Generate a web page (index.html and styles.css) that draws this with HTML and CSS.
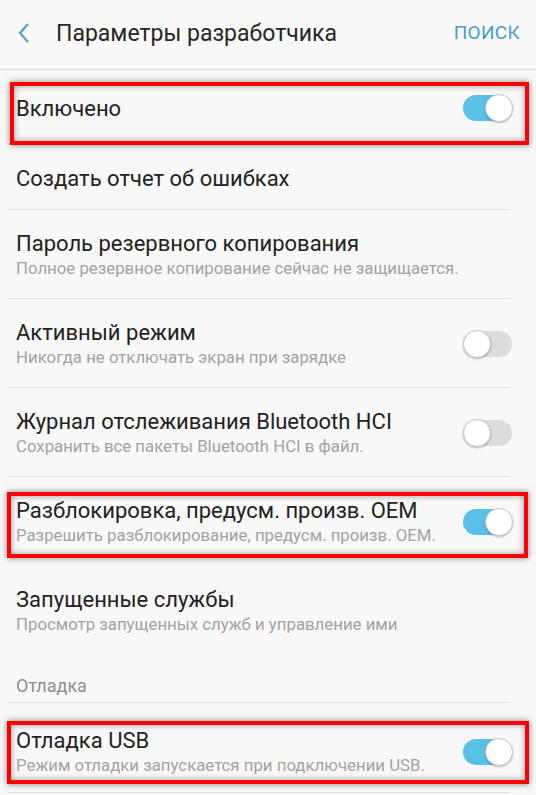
FILE: index.html
```html
<!DOCTYPE html>
<html lang="ru">
<head>
    <meta charset="UTF-8">
    <meta name="viewport" content="width=device-width, initial-scale=1.0">
    <title>Параметры разработчика</title>
    <link rel="stylesheet" href="styles.css">
</head>
<body>

    <!-- Top bar with back arrow and search -->
    <div class="header">
        <svg class="back" width="14" height="22" viewBox="0 0 14 22">
            <polyline points="11,2 3,11 11,20" fill="none" stroke="#4a9dc3" stroke-width="2"/>
        </svg>
        <div class="header-title">Параметры разработчика</div>
        <div class="search">ПОИСК</div>
    </div>

    <div class="list">
        <div class="row row-first marked mark-1 line">
            <div class="text"><div class="title">Включено</div></div>
            <div class="switch on"><span></span></div>
        </div>

        <div class="row row-single line">
            <div class="text"><div class="title">Создать отчет об ошибках</div></div>
        </div>

        <div class="row line">
            <div class="text">
                <div class="title">Пароль резервного копирования</div>
                <div class="sub">Полное резервное копирование сейчас не защищается.</div>
            </div>
        </div>

        <div class="row line">
            <div class="text">
                <div class="title">Активный режим</div>
                <div class="sub">Никогда не отключать экран при зарядке</div>
            </div>
            <div class="switch"><span></span></div>
        </div>

        <div class="row line">
            <div class="text">
                <div class="title">Журнал отслеживания Bluetooth HCI</div>
                <div class="sub">Сохранить все пакеты Bluetooth HCI в файл.</div>
            </div>
            <div class="switch"><span></span></div>
        </div>

        <div class="row marked mark-2">
            <div class="text">
                <div class="title">Разблокировка, предусм. произв. OEM</div>
                <div class="sub">Разрешить разблокирование, предусм. произв. OEM.</div>
            </div>
            <div class="switch on"><span></span></div>
        </div>

        <div class="row">
            <div class="text">
                <div class="title">Запущенные службы</div>
                <div class="sub">Просмотр запущенных служб и управление ими</div>
            </div>
        </div>

        <div class="category line">Отладка</div>

        <div class="row row-last marked mark-3 line">
            <div class="text">
                <div class="title">Отладка USB</div>
                <div class="sub">Режим отладки запускается при подключении USB.</div>
            </div>
            <div class="switch on"><span></span></div>
        </div>
    </div>

</body>
</html>
```

FILE: styles.css
```css
body {
    font-family: 'Roboto', 'Noto Sans', sans-serif;
    background-color: #f8f8f8;
    margin: 0;
    color: #222;
}

.header {
    display: flex;
    align-items: center;
    height: 69px;
    padding: 0 16px 0 17px;
    border-bottom: 1px solid #dcdcdc;
}

.back {
    margin-top: -4px;
}

.header-title {
    flex: 1;
    margin-left: 25px;
    margin-top: -3px;
    font-size: 23px;
    color: #262626;
}

.search {
    margin-top: -4px;
    font-size: 19px;
    color: #4a9dc3;
    letter-spacing: 0.3px;
}

.list {
    display: flex;
    flex-direction: column;
}

.row {
    position: relative;
    display: flex;
    align-items: center;
    height: 89px;
    padding: 0 24px 0 16px;
    box-sizing: border-box;
}

.row-first {
    height: 74px;
    padding-top: 2px;
}

.row-single {
    height: 66px;
    padding-top: 2px;
}

.row-last {
    height: 90px;
    padding-top: 8px;
}

/* dividers stop short of the edges */
.line::before {
    content: '';
    position: absolute;
    left: 8px;
    right: 25px;
    bottom: 0;
    height: 1px;
    background-color: #e2e2e2;
}

.text {
    flex: 1;
}

.title {
    font-size: 22px;
    line-height: 27px;
    color: #222;
}

.sub {
    font-size: 16.8px;
    line-height: 23px;
    color: #a3a3a3;
}

.category {
    position: relative;
    height: 48px;
    padding: 20px 16px 0;
    box-sizing: border-box;
    font-size: 18px;
    color: #8e8e8e;
}

/* switches */
.switch {
    position: relative;
    width: 49px;
    height: 26px;
    border-radius: 13px;
    background-color: #dcdcdc;
}

.switch span {
    position: absolute;
    top: -1px;
    left: 0;
    width: 26px;
    height: 26px;
    border-radius: 50%;
    background-color: #fff;
    border: 1px solid #c8c8c8;
    box-shadow: 0 1px 2px rgba(0, 0, 0, 0.25);
}

.switch.on {
    background-color: #5bc0e5;
}

.switch.on span {
    left: auto;
    right: -1px;
}

/* red highlight frames drawn over rows */
.marked::after {
    content: '';
    position: absolute;
    border: 4px solid #ff0000;
    box-shadow: 0 0 6px rgba(0, 0, 0, 0.5), inset 0 0 6px rgba(0, 0, 0, 0.4);
    pointer-events: none;
}

.mark-1::after {
    left: 10px;
    top: 12px;
    width: 511px;
    height: 55px;
}

.mark-2::after {
    left: 7px;
    top: 15px;
    width: 513px;
    height: 58px;
}

.mark-3::after {
    left: 7px;
    top: 18px;
    width: 514px;
    height: 55px;
}
```
